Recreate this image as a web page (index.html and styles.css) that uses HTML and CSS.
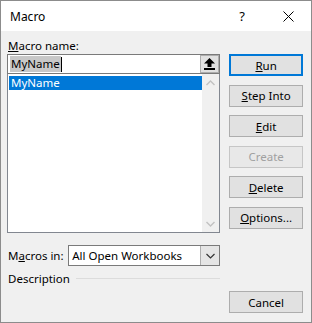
FILE: index.html
```html
<!DOCTYPE html>
<html lang="en">
<head>
    <meta charset="UTF-8">
    <title>Macro</title>
    <link rel="stylesheet" href="styles.css">
</head>
<body>
<div class="dialog">
    <div class="titlebar">
        <span class="title">Macro</span>
        <span class="help">?</span>
        <span class="close">
            <svg width="11" height="11" viewBox="0 0 11 11"><path d="M0.5 0.5 L10.5 10.5 M10.5 0.5 L0.5 10.5" stroke="#000" stroke-width="1"/></svg>
        </span>
    </div>

    <div class="content">
        <div class="left">
            <div class="label"><u>M</u>acro name:</div>
            <div class="namebox">
                <div class="nameinput"><span class="sel">MyName</span><span class="caret"></span></div>
                <div class="upbtn">
                    <svg width="11" height="12" viewBox="0 0 11 12"><path d="M5.5 0 L11 5.5 L7.5 5.5 L7.5 9 L3.5 9 L3.5 5.5 L0 5.5 Z" fill="#000"/><rect x="0" y="10" width="11" height="2" fill="#000"/></svg>
                </div>
            </div>
            <div class="listbox">
                <div class="items">
                    <div class="item selected">MyName</div>
                </div>
                <div class="scroll">
                    <svg width="9" height="6" viewBox="0 0 9 6"><path d="M0.5 5 L4.5 1 L8.5 5" fill="none" stroke="#c2c2c2" stroke-width="1.4"/></svg>
                    <svg width="9" height="6" viewBox="0 0 9 6"><path d="M0.5 1 L4.5 5 L8.5 1" fill="none" stroke="#c2c2c2" stroke-width="1.4"/></svg>
                </div>
            </div>
            <div class="macros-in">
                <span class="label">M<u>a</u>cros in:</span>
                <div class="combo">
                    <span class="combo-text">All Open Workbooks</span>
                    <span class="combo-btn">
                        <svg width="9" height="6" viewBox="0 0 9 6"><path d="M0.5 1 L4.5 5 L8.5 1" fill="none" stroke="#333" stroke-width="1.2"/></svg>
                    </span>
                </div>
            </div>
            <div class="desc">
                <span>Description</span>
                <span class="rule"></span>
            </div>
        </div>

        <div class="right">
            <button class="btn default"><u>R</u>un</button>
            <button class="btn"><u>S</u>tep Into</button>
            <button class="btn"><u>E</u>dit</button>
            <button class="btn disabled">Create</button>
            <button class="btn"><u>D</u>elete</button>
            <button class="btn"><u>O</u>ptions...</button>
            <button class="btn cancel">Cancel</button>
        </div>
    </div>
</div>
</body>
</html>
```

FILE: styles.css
```css
body {
  margin: 0;
  font-family: "Noto Sans", "Open Sans", sans-serif;
  font-size: 11.5px;
  color: #000;
}

.dialog {
  width: 312px;
  height: 323px;
  box-sizing: border-box;
  border: 1px solid #8c8c8c;
  background-color: #f0f0f0;
  display: flex;
  flex-direction: column;
}

/* title bar */
.titlebar {
  height: 30px;
  background-color: #fff;
  display: flex;
  align-items: center;
}
.title {
  padding-left: 9px;
  flex: 1;
  font-size: 12px;
}
.help {
  width: 46px;
  text-align: center;
  font-size: 13px;
}
.close {
  width: 46px;
  display: flex;
  justify-content: center;
}

/* main area */
.content {
  flex: 1;
  display: flex;
  padding: 7px 8px 9px 6px;
  gap: 9px;
}

.left {
  width: 214px;
  display: flex;
  flex-direction: column;
}
.label {
  height: 16px;
  line-height: 16px;
  padding-left: 1px;
}

.namebox {
  display: flex;
  height: 20px;
  box-sizing: border-box;
  border: 1px solid #7a7a7a;
  background-color: #fff;
}
.nameinput {
  flex: 1;
  display: flex;
  align-items: center;
  padding-left: 2px;
}
.sel {
  background-color: #c8c8c8;
  line-height: 16px;
  padding: 0 1px;
}
.caret {
  width: 1px;
  height: 15px;
  background-color: #000;
}
.upbtn {
  width: 19px;
  box-sizing: border-box;
  border: 1px solid #adadad;
  background-color: #e1e1e1;
  display: flex;
  align-items: center;
  justify-content: center;
}

.listbox {
  height: 159px;
  box-sizing: border-box;
  border: 1px solid #828790;
  border-top: none;
  background-color: #fff;
  display: flex;
}
.items {
  flex: 1;
  padding: 2px 0 0 1px;
}
.item {
  height: 14px;
  line-height: 14px;
  padding-left: 2px;
}
.item.selected {
  background-color: #0078d7;
  color: #fff;
}
.scroll {
  width: 17px;
  background-color: #f0f0f0;
  display: flex;
  flex-direction: column;
  justify-content: space-between;
  align-items: center;
  padding: 6px 0 5px;
}

.macros-in {
  margin-top: 12px;
  display: flex;
  align-items: center;
  justify-content: space-between;
}
.combo {
  width: 152px;
  height: 21px;
  box-sizing: border-box;
  border: 1px solid #7a7a7a;
  background-color: #fff;
  display: flex;
}
.combo-text {
  flex: 1;
  line-height: 19px;
  padding-left: 3px;
}
.combo-btn {
  width: 18px;
  background-color: #e5e5e5;
  border-left: 1px solid #adadad;
  display: flex;
  align-items: center;
  justify-content: center;
}

.desc {
  margin-top: 4px;
  display: flex;
  align-items: center;
  gap: 6px;
  padding-left: 1px;
  height: 16px;
}
.rule {
  flex: 1;
  height: 1px;
  background-color: #dcdcdc;
}

/* buttons */
.right {
  width: 74px;
  display: flex;
  flex-direction: column;
  padding-top: 16px;
  gap: 8.5px;
}
.btn {
  height: 22px;
  box-sizing: border-box;
  border: 1px solid #adadad;
  background-color: #e1e1e1;
  font-family: inherit;
  font-size: 11.5px;
  color: #000;
  padding: 0;
}
.btn.default {
  border: 2px solid #0078d7;
}
.btn.disabled {
  color: #a0a0a0;
  background-color: #e8e8e8;
  border-color: #c6c6c6;
}
.btn.cancel {
  margin-top: auto;
}
```
